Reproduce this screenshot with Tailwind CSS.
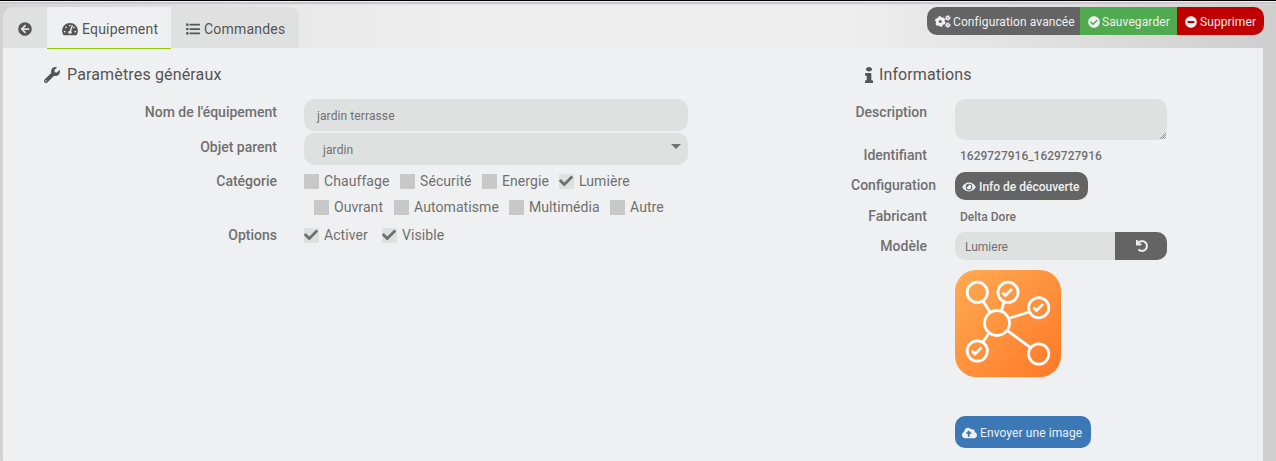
<!DOCTYPE html>
<html lang="fr">
<head>
    <meta charset="UTF-8">
    <meta name="viewport" content="width=device-width, initial-scale=1.0">
    <title>Equipement</title>
    <script src="https://cdn.jsdelivr.net/npm/@tailwindcss/browser@4"></script>
</head>
<body class="h-[461px] overflow-hidden bg-[linear-gradient(to_right,#d2d2d2_0%,#e9e9e9_23%,#eeeeee_36%,#eeeeee_66%,#e4e4e4_78%,#cecece_100%)] font-[Roboto,sans-serif] text-[14px] leading-5 text-[#707070]">

    <svg class="hidden">
        <symbol id="check" viewBox="0 0 512 512"><path d="M173.898 439.404l-166.4-166.4c-9.997-9.997-9.997-26.206 0-36.204l36.203-36.204c9.997-9.998 26.207-9.998 36.204 0L192 312.69 432.095 72.596c9.997-9.997 26.207-9.997 36.204 0l36.203 36.204c9.997 9.997 9.997 26.206 0 36.204l-294.4 294.401c-9.998 9.997-26.207 9.997-36.204-.001z"/></symbol>
    </svg>

    <div class="h-px bg-black"></div>
    <div class="h-px bg-[#f0f0f0]"></div>
    <div class="h-[2px] bg-[#cdc7cd]"></div>

    <header class="flex h-11 items-start justify-between border-t border-[#e0dde0]/60 pt-[2px] pr-3 pl-[3px]">
        <nav class="flex h-[41px] overflow-hidden rounded-t-[10px] bg-[#dfe1e0] text-[14px] tracking-[0.2px] text-[#555555]">
            <a href="#" class="flex w-11 items-center justify-center pt-[3px]">
                <svg class="size-[14px] fill-current" viewBox="0 0 512 512"><path d="M256 504C119 504 8 393 8 256S119 8 256 8s248 111 248 248-111 248-248 248zm28.9-143.6L209.4 288H392c13.3 0 24-10.7 24-24v-16c0-13.3-10.7-24-24-24H209.4l75.5-72.4c9.7-9.3 9.9-24.8.4-34.3l-11-10.9c-9.4-9.4-24.6-9.4-33.9 0L107.7 239c-9.4 9.4-9.4 24.6 0 33.9l132.7 132.7c9.4 9.4 24.6 9.4 33.9 0l11-10.9c9.5-9.5 9.3-25-.4-34.3z"/></svg>
            </a>
            <a href="#" class="flex w-[124px] items-center gap-1 bg-[#eff0f2] pt-[3px] pl-[15px]">
                <svg class="h-[14px] w-4 fill-current" viewBox="0 0 576 512"><path d="M288 32C128.94 32 0 160.94 0 320c0 52.8 14.25 102.26 39.06 144.8 5.61 9.62 16.3 15.2 27.44 15.2h443c11.14 0 21.83-5.58 27.44-15.2C561.75 422.26 576 372.8 576 320c0-159.06-128.94-288-288-288zm0 64c14.71 0 26.58 10.13 30.32 23.65-1.11 2.26-2.64 4.23-3.45 6.67l-9.22 27.67c-5.13 3.49-10.97 6.01-17.64 6.01-17.67 0-32-14.33-32-32S270.33 96 288 96zM96 384c-17.67 0-32-14.33-32-32s14.33-32 32-32 32 14.33 32 32-14.33 32-32 32zm48-160c-17.67 0-32-14.33-32-32s14.33-32 32-32 32 14.33 32 32-14.33 32-32 32zm246.77-72.41l-61.33 184C343.13 347.33 352 364.54 352 384c0 11.72-3.38 22.55-8.88 32H232.88c-5.5-9.45-8.88-20.28-8.88-32 0-33.94 26.5-61.43 59.9-63.59l61.34-184.01c4.17-12.56 17.73-19.45 30.36-15.17 12.57 4.19 19.35 17.79 15.17 30.36zm14.66 57.2l15.52-46.55c3.47-1.29 7.13-2.23 11.05-2.23 17.67 0 32 14.33 32 32s-14.33 32-32 32c-11.38-.01-20.89-6.28-26.57-15.22zM480 384c-17.67 0-32-14.33-32-32s14.33-32 32-32 32 14.33 32 32-14.33 32-32 32z"/></svg>
                Equipement
            </a>
            <a href="#" class="flex w-32 items-center gap-1 pt-[3px] pl-[15px]">
                <svg class="size-[14px] fill-current" viewBox="0 0 512 512"><circle cx="48" cy="96" r="48"/><circle cx="48" cy="256" r="48"/><circle cx="48" cy="416" r="48"/><rect x="128" y="60" width="384" height="64" rx="16"/><rect x="128" y="224" width="384" height="64" rx="16"/><rect x="128" y="384" width="384" height="64" rx="16"/></svg>
                Commandes
            </a>
        </nav>

        <div class="flex h-7 overflow-hidden rounded-[10px] text-[12px] tracking-[0.1px] text-[#eff0f2]">
            <button class="flex w-[153px] items-center gap-[2px] bg-[#646464] pt-px pl-2">
                <svg class="h-[13px] w-4 fill-none stroke-current" viewBox="0 0 640 512">
                    <circle cx="210" cy="256" r="120" stroke-width="116"/>
                    <circle cx="210" cy="256" r="184" stroke-width="56" stroke-dasharray="108 84.6"/>
                    <circle cx="512" cy="112" r="58" stroke-width="60"/>
                    <circle cx="512" cy="112" r="94" stroke-width="32" stroke-dasharray="54 44.4"/>
                    <circle cx="512" cy="400" r="58" stroke-width="60"/>
                    <circle cx="512" cy="400" r="94" stroke-width="32" stroke-dasharray="54 44.4"/>
                </svg>
                Configuration avancée
            </button>
            <button class="flex w-[97px] items-center gap-[2px] bg-[#50aa50] pt-px pl-2">
                <svg class="size-3 fill-current" viewBox="0 0 512 512"><path d="M504 256c0 136.967-111.033 248-248 248S8 392.967 8 256 119.033 8 256 8s248 111.033 248 248zM227.314 387.314l184-184c6.248-6.248 6.248-16.379 0-22.627l-22.627-22.627c-6.248-6.249-16.379-6.249-22.628 0L216 308.118l-70.059-70.059c-6.248-6.248-16.379-6.248-22.628 0l-22.627 22.627c-6.248 6.248-6.248 16.379 0 22.627l104 104c6.249 6.249 16.379 6.249 22.628.001z"/></svg>
                Sauvegarder
            </button>
            <button class="flex w-[87px] items-center gap-[3px] bg-[#c00000] pt-px pl-2">
                <svg class="size-3 fill-current" viewBox="0 0 512 512"><path d="M256 8C119 8 8 119 8 256s111 248 248 248 248-111 248-248S393 8 256 8zM124 296c-6.6 0-12-5.4-12-12v-56c0-6.6 5.4-12 12-12h264c6.6 0 12 5.4 12 12v56c0 6.6-5.4 12-12 12H124z"/></svg>
                Supprimer
            </button>
        </div>
    </header>

    <main class="ml-[3px] flex h-[413px] w-[1260px] bg-[#eff0f2]">
        <section class="w-[820px]">
            <div class="ml-11 h-px w-[124px] bg-[#94ca02]"></div>
            <h2 class="flex h-[50px] items-center gap-[7px] pt-px pl-[41px] text-[16px] tracking-[0.15px] text-[#555555]">
                <svg class="size-4 fill-current" viewBox="0 0 512 512"><path d="M507.73 109.1c-2.24-9.03-13.54-12.09-20.12-5.51l-74.36 74.36-67.88-11.31-11.31-67.88 74.36-74.36c6.62-6.62 3.43-17.9-5.66-20.16-47.38-11.74-99.55.91-136.58 37.93-39.64 39.64-50.55 97.1-34.05 147.2L18.74 402.76c-24.99 24.99-24.99 65.51 0 90.5 24.99 24.99 65.51 24.99 90.5 0l213.21-213.21c50.12 16.71 107.47 5.68 147.37-34.22 37.07-37.07 49.7-89.32 37.91-136.73zM64 472c-13.25 0-24-10.75-24-24 0-13.26 10.75-24 24-24s24 10.74 24 24c0 13.25-10.75 24-24 24z"/></svg>
                Paramètres généraux
            </h2>

            <div class="flex h-[34px] gap-[27px]">
                <label class="w-[274px] pt-[3px] text-right font-medium">Nom de l'équipement</label>
                <div class="flex h-8 w-96 items-center rounded-[10px] bg-[#dfe1e0] px-[13px] pt-px text-[12px] tracking-[0.1px]">jardin terrasse</div>
            </div>
            <div class="flex h-[38px] gap-[27px]">
                <label class="w-[274px] pt-1 text-right font-medium">Objet parent</label>
                <div class="flex h-8 w-96 items-center justify-between rounded-[10px] bg-[#dfe1e0] pt-px pr-[7px] pl-[19px] text-[12px] tracking-[0.1px]">
                    jardin
                    <svg class="mb-[6px] h-[5px] w-[10px] fill-current" viewBox="0 0 10 5"><path d="M0 0h10L5 5z"/></svg>
                </div>
            </div>
            <div class="flex h-[54px] gap-[27px]">
                <label class="w-[274px] text-right font-medium">Catégorie</label>
                <div class="tracking-[0.08px]">
                    <div class="flex h-[26px]">
                        <label class="flex h-5 w-24 items-center gap-[5px]"><span class="size-[15px] bg-[#c8c8c8]"></span>Chauffage</label>
                        <label class="flex h-5 w-[82px] items-center gap-[5px]"><span class="size-[15px] bg-[#c8c8c8]"></span>Sécurité</label>
                        <label class="flex h-5 w-[77px] items-center gap-[5px]"><span class="size-[15px] bg-[#c8c8c8]"></span>Energie</label>
                        <label class="flex h-5 items-center gap-[5px]"><span class="size-[15px] bg-[#dfe1e0]"><svg class="size-[14px] fill-current"><use href="#check"/></svg></span>Lumière</label>
                    </div>
                    <div class="flex pl-[10px]">
                        <label class="flex h-5 w-20 items-center gap-[5px]"><span class="size-[15px] bg-[#c8c8c8]"></span>Ouvrant</label>
                        <label class="flex h-5 w-[115px] items-center gap-[5px]"><span class="size-[15px] bg-[#c8c8c8]"></span>Automatisme</label>
                        <label class="flex h-5 w-[101px] items-center gap-[5px]"><span class="size-[15px] bg-[#c8c8c8]"></span>Multimédia</label>
                        <label class="flex h-5 items-center gap-[5px]"><span class="size-[15px] bg-[#c8c8c8]"></span>Autre</label>
                    </div>
                </div>
            </div>
            <div class="flex gap-[27px]">
                <label class="w-[274px] text-right font-medium">Options</label>
                <div class="flex tracking-[0.08px]">
                    <label class="flex h-5 w-[78px] items-center gap-[5px]"><span class="size-[15px] bg-[#dfe1e0]"><svg class="size-[14px] fill-current"><use href="#check"/></svg></span>Activer</label>
                    <label class="flex h-5 items-center gap-[5px]"><span class="size-[15px] bg-[#dfe1e0]"><svg class="size-[14px] fill-current"><use href="#check"/></svg></span>Visible</label>
                </div>
            </div>
        </section>

        <section class="pt-px">
            <h2 class="flex h-[50px] items-center gap-[6px] pt-px pl-[42px] text-[16px] tracking-[0.1px] text-[#555555]">
                <svg class="h-4 w-2 fill-current" viewBox="0 0 192 512" preserveAspectRatio="none"><path d="M20 424.229h20V279.771H20c-11.046 0-20-8.954-20-20V212c0-11.046 8.954-20 20-20h112c11.046 0 20 8.954 20 20v212.229h20c11.046 0 20 8.954 20 20V492c0 11.046-8.954 20-20 20H20c-11.046 0-20-8.954-20-20v-47.771c0-11.046 8.954-20 20-20zM96 0C56.235 0 24 32.235 24 72s32.235 72 72 72 72-32.235 72-72S135.764 0 96 0z"/></svg>
                Informations
            </h2>

            <div class="flex h-[46px] gap-7">
                <label class="w-[104px] pt-[3px] text-right font-medium">Description</label>
                <div class="flex h-[41px] w-[212px] items-end justify-end rounded-[10px] bg-[#dfe1e0]">
                    <svg class="size-2 fill-none stroke-[#707070]" viewBox="0 0 8 8"><path d="M1 7l6-6M3 7l4-4M5 7l2-2" stroke-dasharray="1 .5"/></svg>
                </div>
            </div>
            <div class="flex h-[27px] gap-[33px]">
                <label class="w-[104px] text-right font-medium">Identifiant</label>
                <span class="pt-px text-[12px] font-medium">1629727916_1629727916</span>
            </div>
            <div class="flex h-[34px] gap-[19px]">
                <label class="w-[113px] pt-[3px] text-right font-medium">Configuration</label>
                <button class="flex h-7 w-[133px] items-center gap-[3px] rounded-[10px] bg-[#646464] pt-px pl-[7px] text-[12px] font-medium text-[#eff0f2]">
                    <svg class="h-3 w-[14px] fill-current" viewBox="0 0 576 512"><path d="M572.52 241.4C518.29 135.59 410.93 64 288 64S57.68 135.64 3.48 241.41a32.35 32.35 0 0 0 0 29.19C57.71 376.41 165.07 448 288 448s230.32-71.64 284.52-177.41a32.35 32.35 0 0 0 0-29.19zM288 400a144 144 0 1 1 144-144 143.93 143.93 0 0 1-144 144zm0-240a95.31 95.31 0 0 0-25.31 3.79 47.85 47.85 0 0 1-66.9 66.9A95.78 95.78 0 1 0 288 160z"/></svg>
                    Info de découverte
                </button>
            </div>
            <div class="flex h-[26px] gap-[33px]">
                <label class="w-[104px] text-right font-medium">Fabricant</label>
                <span class="pt-px text-[12px] font-medium">Delta Dore</span>
            </div>
            <div class="flex h-[38px] gap-7">
                <label class="w-[104px] pt-1 text-right font-medium">Modèle</label>
                <div class="flex h-7 w-[212px] overflow-hidden rounded-[10px] bg-[#dfe1e0] text-[12px]">
                    <span class="flex w-40 items-center pt-px pl-[10px]">Lumiere</span>
                    <button class="flex w-[52px] items-center justify-center bg-[#646464] pl-px text-[#eff0f2]">
                        <svg class="size-3 fill-current stroke-current" stroke-width="16" viewBox="0 0 512 512"><path d="M212.333 224.333H12c-6.627 0-12-5.373-12-12V12C0 5.373 5.373 0 12 0h48c6.627 0 12 5.373 12 12v78.112C117.773 39.279 184.26 7.47 258.175 8.007c136.906.994 246.448 111.623 246.157 248.532C504.041 393.258 393.12 504 256.333 504c-64.089 0-122.496-24.313-166.51-64.215-5.099-4.622-5.334-12.554-.467-17.42l33.967-33.967c4.474-4.474 11.662-4.717 16.401-.525C170.76 415.336 211.58 432 256.333 432c97.268 0 176-78.716 176-176 0-97.267-78.716-176-176-176-58.496 0-110.28 28.476-142.274 72.333h98.274c6.627 0 12 5.373 12 12v48c0 6.627-5.373 12-12 12z"/></svg>
                    </button>
                </div>
            </div>

            <div class="flex flex-col items-start gap-[39px] pl-[132px]">
                <svg class="h-[107px] w-[106px]" viewBox="0 0 106 107" fill="none">
                    <defs>
                        <linearGradient id="orange" x1="0" y1="0" x2="1" y2="1">
                            <stop offset="0" stop-color="#ffab54"/>
                            <stop offset="1" stop-color="#ff7826"/>
                        </linearGradient>
                    </defs>
                    <rect width="106" height="107" rx="21" fill="url(#orange)"/>
                    <g stroke="#fff" stroke-width="2.8">
                        <path d="M28 31l7 11M49 32l-3 10M74 42l-19 6M53 61l23 17M34 63l-6 9"/>
                        <circle cx="42" cy="53" r="12.5"/>
                        <circle cx="22.3" cy="22.3" r="10.1"/>
                        <circle cx="53" cy="22.3" r="10.1"/>
                        <circle cx="83.7" cy="37.7" r="10.1"/>
                        <circle cx="22.3" cy="81" r="10.1"/>
                        <circle cx="83.7" cy="84" r="10.1"/>
                        <path d="M47.500 22.500l3 3 6.500-6.500M78.500 37.500l3 3 6.500-6.500M17 81l3 3 6.500-6.500"/>
                    </g>
                </svg>
                <button class="flex h-8 w-[136px] items-center gap-[3px] rounded-[10px] bg-[#3c78b5] pt-px pl-[7px] text-[12px] tracking-[0.1px] text-[#eff0f2]">
                    <svg class="h-3 w-[15px] fill-current" viewBox="0 0 640 512"><path d="M537.6 226.6c4.1-10.7 6.4-22.4 6.4-34.6 0-53-43-96-96-96-19.7 0-38.1 6-53.3 16.2C367 64.2 315.3 32 256 32c-88.4 0-160 71.6-160 160 0 2.7.1 5.4.2 8.1C40.2 219.8 0 273.2 0 336c0 79.5 64.5 144 144 144h368c70.7 0 128-57.3 128-128 0-61.9-44-113.6-102.4-125.4zM393.4 288H328v112c0 8.8-7.2 16-16 16h-48c-8.8 0-16-7.2-16-16V288h-65.4c-14.3 0-21.4-17.2-11.3-27.3l105.4-105.4c6.2-6.2 16.4-6.2 22.6 0l105.4 105.4c10.1 10.1 2.9 27.3-11.3 27.3z"/></svg>
                    Envoyer une image
                </button>
            </div>
        </section>
    </main>

</body>
</html>
